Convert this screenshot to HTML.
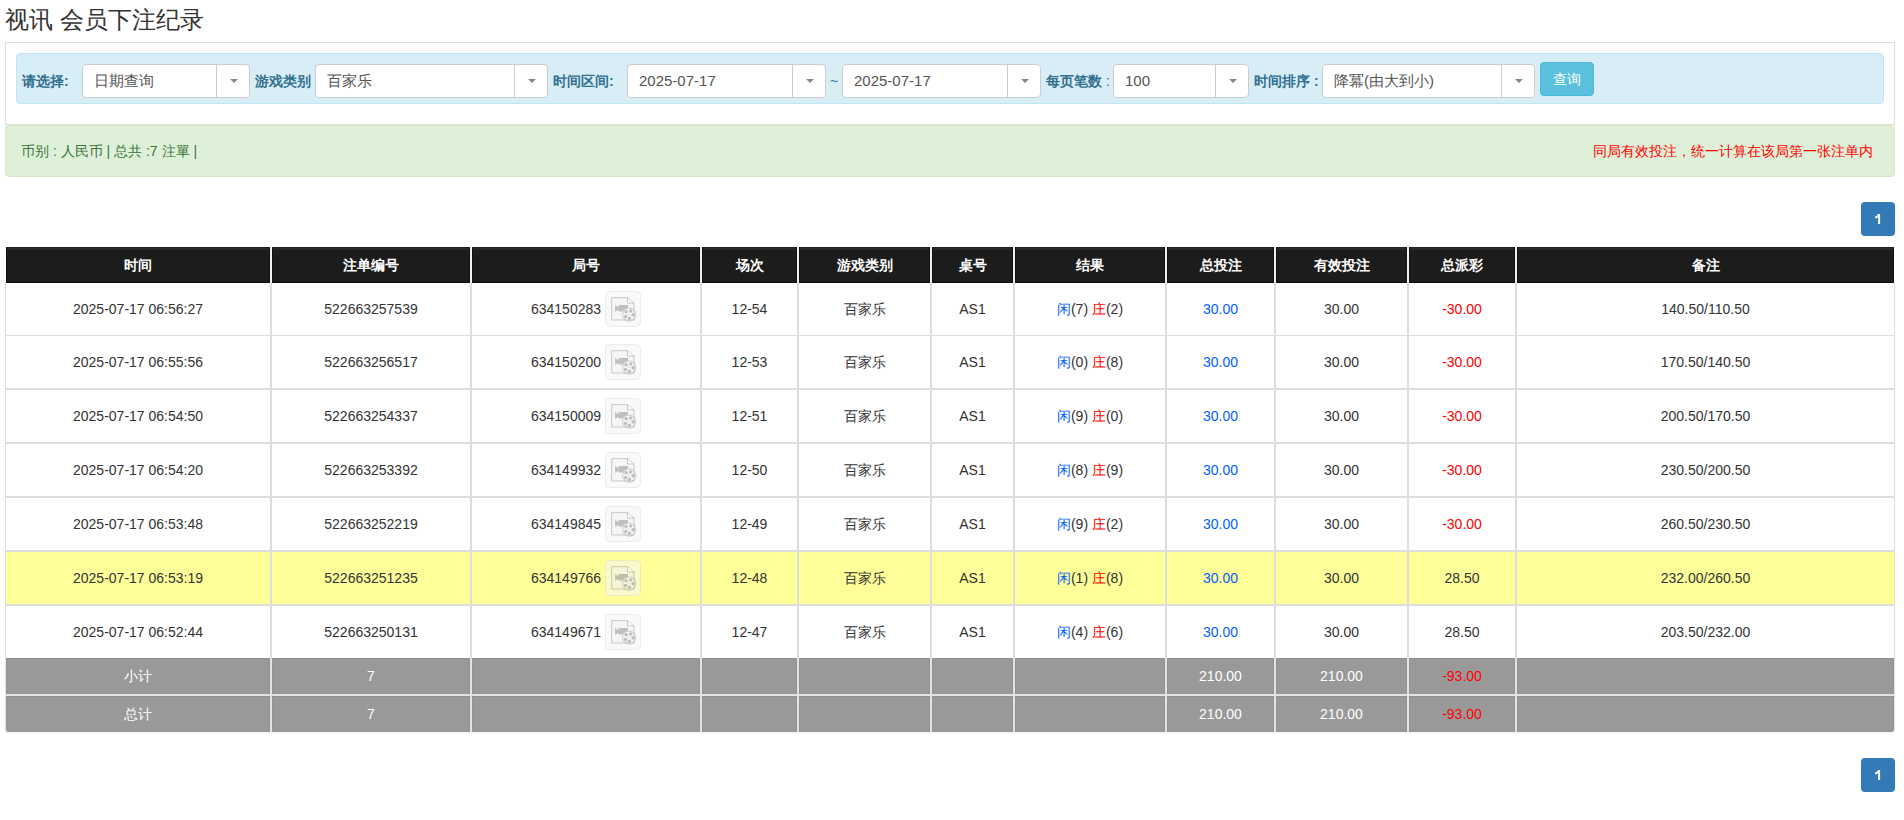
<!DOCTYPE html>
<html><head><meta charset="utf-8"><style>
html,body{margin:0;padding:0}
body{width:1904px;height:820px;position:relative;overflow:hidden;background:#fff;font-family:"Liberation Sans",sans-serif;color:#333;font-size:14px}
.a{position:absolute}
.title{left:5px;top:2px;font-size:24px;line-height:36px;color:#333;white-space:nowrap}
.panel{left:5px;top:42px;width:1888px;height:81px;border:1px solid #ddd}
.info{left:16px;top:53px;width:1866px;height:49px;border:1px solid #bce8f1;background:#d9edf7;border-radius:4px}
.lbl{position:absolute;top:64px;height:34px;line-height:34px;font-weight:bold;color:#31708f;white-space:nowrap}
.sel{position:absolute;top:64px;height:32px;border:1px solid #ccc;border-radius:4px;background:#fff;font-size:15px;color:#555;line-height:32px;white-space:nowrap}
.sel .t{position:absolute;left:11px;top:0}
.sel .d{position:absolute;top:0;bottom:0;width:1px;background:#ccc}
.sel .ar{position:absolute;top:14px;width:0;height:0;border-left:4px solid transparent;border-right:4px solid transparent;border-top:4px solid #888}
.btn{left:1540px;top:62px;width:52px;height:32px;border:1px solid #46b8da;background:#5bc0de;border-radius:4px;color:#fff;font-size:14px;line-height:32px;text-align:center}
.ok{left:5px;top:125px;width:1888px;height:50px;border:1px solid #d6e9c6;background:#dff0d8;border-radius:4px}
.okl{left:21px;top:125px;height:52px;line-height:52px;color:#3c763d;font-size:14px;white-space:nowrap}
.okr{right:31px;top:125px;height:52px;line-height:52px;color:#f00;font-size:14px;white-space:nowrap}
.pg{left:1861px;width:34px;height:34px;background:#337ab7;border-radius:4px;color:#fff;font-weight:bold;font-size:14px;line-height:34px;text-align:center}
.c{position:absolute;line-height:20px;display:flex;align-items:center;justify-content:center;white-space:nowrap;box-sizing:border-box}
.th{background:#1c1c1c;color:#fff;font-weight:bold;border:1px solid #111;border-top-color:#222;border-bottom-color:#0a0a0a;box-shadow:inset 0 1px 0 #2a2a2a,inset 0 2px 0 #262626}
.gy{background:#999;color:#fff;padding-bottom:2px;border-top:1px solid #8f8f8f;border-left:1px solid #939393;border-right:1px solid #939393}
.bg{background:#fff}
.yl{background:#ffff99}
.bl{color:#0060ff}
.rd{color:#f00}
.ic{margin-left:4px;display:inline-block;vertical-align:middle}
.in{white-space:pre;display:inline-block}
.nt{position:relative;top:1px}
</style></head><body>
<svg width="0" height="0" style="position:absolute"><defs><mask id="m" maskUnits="userSpaceOnUse" x="0" y="0" width="36" height="36"><rect width="36" height="36" fill="#fff"/><circle cx="24.2" cy="23.6" r="7.1" fill="#000"/></mask></defs></svg>
<div class="a title">视讯 会员下注纪录</div>
<div class="a panel"></div>
<div class="a info"></div>
<div class="lbl" style="left:22px">请选择:</div>
<div class="lbl" style="left:255px">游戏类别</div>
<div class="lbl" style="left:553px">时间区间:</div>
<div class="lbl" style="left:1046px">每页笔数 <span style="font-weight:normal">:</span></div>
<div class="lbl" style="left:1254px">时间排序 :</div>
<div class="sel" style="left:82px;width:166px"><span class="t" style="left:11px">日期查询</span><span class="d" style="left:133px"></span><span class="ar" style="left:147px"></span></div>
<div class="sel" style="left:315px;width:231px"><span class="t" style="left:11px">百家乐</span><span class="d" style="left:198px"></span><span class="ar" style="left:212px"></span></div>
<div class="sel" style="left:627px;width:197px"><span class="t" style="left:11px">2025-07-17</span><span class="d" style="left:164px"></span><span class="ar" style="left:178px"></span></div>
<div class="sel" style="left:842px;width:197px"><span class="t" style="left:11px">2025-07-17</span><span class="d" style="left:164px"></span><span class="ar" style="left:178px"></span></div>
<div class="sel" style="left:1113px;width:134px"><span class="t" style="left:11px">100</span><span class="d" style="left:101px"></span><span class="ar" style="left:115px"></span></div>
<div class="sel" style="left:1322px;width:211px"><span class="t" style="left:11px">降冪(由大到小)</span><span class="d" style="left:178px"></span><span class="ar" style="left:192px"></span></div>
<div class="a" style="left:830px;top:64px;line-height:34px;color:#31708f;font-size:14px">~</div>
<div class="a btn">查询</div>
<div class="a ok"></div>
<div class="a okl">币别 : 人民币 | 总共 :7 注單 |</div>
<div class="a okr">同局有效投注，统一计算在该局第一张注单内</div>
<div class="a pg" style="top:202px"><svg width="34" height="34" viewBox="0 0 34 34" style="display:block"><path d="M17.1 11.9H19.1V22H17.1V14.9Q15.9 15.9 14.1 16.5V14.7Q15.9 14 17.1 11.9Z" fill="#fff"/></svg></div>
<div class="a" style="left:5px;top:283px;width:1890px;height:375px;background:#ddd"></div>
<div class="c bg" style="left:6px;top:283px;width:264px;height:52px"><span class="in">2025-07-17 06:56:27</span></div>
<div class="c bg" style="left:272px;top:283px;width:198px;height:52px"><span class="in">522663257539</span></div>
<div class="c bg" style="left:472px;top:283px;width:228px;height:52px"><span class="in"><span class="nt">634150283</span><svg class="ic" width="36" height="36" viewBox="0 0 36 36"><rect x="0.5" y="0.5" width="35" height="35" rx="4" fill="rgba(245,245,245,0.57)" stroke="rgba(200,200,200,0.3)"/><path d="M6.7 6.7H22.5L29 12V29H6.7Z" fill="rgba(240,240,240,0.3)" stroke="rgba(0,0,0,0.19)"/><path d="M22.5 6.7V12H29" fill="rgba(255,255,255,0.6)" stroke="rgba(0,0,0,0.19)"/><path mask="url(#m)" d="M10.1 14L13.5 16.2V14H23V20.5H13.5V18.8L10.1 21Z" fill="rgba(0,0,0,0.22)"/><circle cx="24.2" cy="23.6" r="6.6" fill="rgba(250,250,250,0.3)" stroke="rgba(0,0,0,0.17)" stroke-width="1"/><circle cx="21.1" cy="20.8" r="1.75" fill="rgba(0,0,0,0.22)"/><circle cx="25.6" cy="19.9" r="1.75" fill="rgba(0,0,0,0.22)"/><circle cx="28" cy="23.7" r="1.75" fill="rgba(0,0,0,0.22)"/><circle cx="24.4" cy="27.2" r="1.75" fill="rgba(0,0,0,0.22)"/><circle cx="20.6" cy="25.4" r="1.75" fill="rgba(0,0,0,0.22)"/><circle cx="23.9" cy="23.4" r="0.6" fill="rgba(0,0,0,0.22)"/></svg></span></div>
<div class="c bg" style="left:702px;top:283px;width:95px;height:52px"><span class="in">12-54</span></div>
<div class="c bg" style="left:799px;top:283px;width:131px;height:52px"><span class="in">百家乐</span></div>
<div class="c bg" style="left:932px;top:283px;width:81px;height:52px"><span class="in">AS1</span></div>
<div class="c bg" style="left:1015px;top:283px;width:150px;height:52px"><span class="in"><span class="bl">闲</span>(7) <span class="rd">庄</span>(2)</span></div>
<div class="c bg" style="left:1167px;top:283px;width:107px;height:52px"><span class="in"><span class="bl">30.00</span></span></div>
<div class="c bg" style="left:1276px;top:283px;width:131px;height:52px"><span class="in">30.00</span></div>
<div class="c bg" style="left:1409px;top:283px;width:106px;height:52px"><span class="in"><span class="rd">-30.00</span></span></div>
<div class="c bg" style="left:1517px;top:283px;width:377px;height:52px"><span class="in">140.50/110.50</span></div>
<div class="c bg" style="left:6px;top:336px;width:264px;height:52px"><span class="in">2025-07-17 06:55:56</span></div>
<div class="c bg" style="left:272px;top:336px;width:198px;height:52px"><span class="in">522663256517</span></div>
<div class="c bg" style="left:472px;top:336px;width:228px;height:52px"><span class="in"><span class="nt">634150200</span><svg class="ic" width="36" height="36" viewBox="0 0 36 36"><rect x="0.5" y="0.5" width="35" height="35" rx="4" fill="rgba(245,245,245,0.57)" stroke="rgba(200,200,200,0.3)"/><path d="M6.7 6.7H22.5L29 12V29H6.7Z" fill="rgba(240,240,240,0.3)" stroke="rgba(0,0,0,0.19)"/><path d="M22.5 6.7V12H29" fill="rgba(255,255,255,0.6)" stroke="rgba(0,0,0,0.19)"/><path mask="url(#m)" d="M10.1 14L13.5 16.2V14H23V20.5H13.5V18.8L10.1 21Z" fill="rgba(0,0,0,0.22)"/><circle cx="24.2" cy="23.6" r="6.6" fill="rgba(250,250,250,0.3)" stroke="rgba(0,0,0,0.17)" stroke-width="1"/><circle cx="21.1" cy="20.8" r="1.75" fill="rgba(0,0,0,0.22)"/><circle cx="25.6" cy="19.9" r="1.75" fill="rgba(0,0,0,0.22)"/><circle cx="28" cy="23.7" r="1.75" fill="rgba(0,0,0,0.22)"/><circle cx="24.4" cy="27.2" r="1.75" fill="rgba(0,0,0,0.22)"/><circle cx="20.6" cy="25.4" r="1.75" fill="rgba(0,0,0,0.22)"/><circle cx="23.9" cy="23.4" r="0.6" fill="rgba(0,0,0,0.22)"/></svg></span></div>
<div class="c bg" style="left:702px;top:336px;width:95px;height:52px"><span class="in">12-53</span></div>
<div class="c bg" style="left:799px;top:336px;width:131px;height:52px"><span class="in">百家乐</span></div>
<div class="c bg" style="left:932px;top:336px;width:81px;height:52px"><span class="in">AS1</span></div>
<div class="c bg" style="left:1015px;top:336px;width:150px;height:52px"><span class="in"><span class="bl">闲</span>(0) <span class="rd">庄</span>(8)</span></div>
<div class="c bg" style="left:1167px;top:336px;width:107px;height:52px"><span class="in"><span class="bl">30.00</span></span></div>
<div class="c bg" style="left:1276px;top:336px;width:131px;height:52px"><span class="in">30.00</span></div>
<div class="c bg" style="left:1409px;top:336px;width:106px;height:52px"><span class="in"><span class="rd">-30.00</span></span></div>
<div class="c bg" style="left:1517px;top:336px;width:377px;height:52px"><span class="in">170.50/140.50</span></div>
<div class="c bg" style="left:6px;top:390px;width:264px;height:52px"><span class="in">2025-07-17 06:54:50</span></div>
<div class="c bg" style="left:272px;top:390px;width:198px;height:52px"><span class="in">522663254337</span></div>
<div class="c bg" style="left:472px;top:390px;width:228px;height:52px"><span class="in"><span class="nt">634150009</span><svg class="ic" width="36" height="36" viewBox="0 0 36 36"><rect x="0.5" y="0.5" width="35" height="35" rx="4" fill="rgba(245,245,245,0.57)" stroke="rgba(200,200,200,0.3)"/><path d="M6.7 6.7H22.5L29 12V29H6.7Z" fill="rgba(240,240,240,0.3)" stroke="rgba(0,0,0,0.19)"/><path d="M22.5 6.7V12H29" fill="rgba(255,255,255,0.6)" stroke="rgba(0,0,0,0.19)"/><path mask="url(#m)" d="M10.1 14L13.5 16.2V14H23V20.5H13.5V18.8L10.1 21Z" fill="rgba(0,0,0,0.22)"/><circle cx="24.2" cy="23.6" r="6.6" fill="rgba(250,250,250,0.3)" stroke="rgba(0,0,0,0.17)" stroke-width="1"/><circle cx="21.1" cy="20.8" r="1.75" fill="rgba(0,0,0,0.22)"/><circle cx="25.6" cy="19.9" r="1.75" fill="rgba(0,0,0,0.22)"/><circle cx="28" cy="23.7" r="1.75" fill="rgba(0,0,0,0.22)"/><circle cx="24.4" cy="27.2" r="1.75" fill="rgba(0,0,0,0.22)"/><circle cx="20.6" cy="25.4" r="1.75" fill="rgba(0,0,0,0.22)"/><circle cx="23.9" cy="23.4" r="0.6" fill="rgba(0,0,0,0.22)"/></svg></span></div>
<div class="c bg" style="left:702px;top:390px;width:95px;height:52px"><span class="in">12-51</span></div>
<div class="c bg" style="left:799px;top:390px;width:131px;height:52px"><span class="in">百家乐</span></div>
<div class="c bg" style="left:932px;top:390px;width:81px;height:52px"><span class="in">AS1</span></div>
<div class="c bg" style="left:1015px;top:390px;width:150px;height:52px"><span class="in"><span class="bl">闲</span>(9) <span class="rd">庄</span>(0)</span></div>
<div class="c bg" style="left:1167px;top:390px;width:107px;height:52px"><span class="in"><span class="bl">30.00</span></span></div>
<div class="c bg" style="left:1276px;top:390px;width:131px;height:52px"><span class="in">30.00</span></div>
<div class="c bg" style="left:1409px;top:390px;width:106px;height:52px"><span class="in"><span class="rd">-30.00</span></span></div>
<div class="c bg" style="left:1517px;top:390px;width:377px;height:52px"><span class="in">200.50/170.50</span></div>
<div class="c bg" style="left:6px;top:444px;width:264px;height:52px"><span class="in">2025-07-17 06:54:20</span></div>
<div class="c bg" style="left:272px;top:444px;width:198px;height:52px"><span class="in">522663253392</span></div>
<div class="c bg" style="left:472px;top:444px;width:228px;height:52px"><span class="in"><span class="nt">634149932</span><svg class="ic" width="36" height="36" viewBox="0 0 36 36"><rect x="0.5" y="0.5" width="35" height="35" rx="4" fill="rgba(245,245,245,0.57)" stroke="rgba(200,200,200,0.3)"/><path d="M6.7 6.7H22.5L29 12V29H6.7Z" fill="rgba(240,240,240,0.3)" stroke="rgba(0,0,0,0.19)"/><path d="M22.5 6.7V12H29" fill="rgba(255,255,255,0.6)" stroke="rgba(0,0,0,0.19)"/><path mask="url(#m)" d="M10.1 14L13.5 16.2V14H23V20.5H13.5V18.8L10.1 21Z" fill="rgba(0,0,0,0.22)"/><circle cx="24.2" cy="23.6" r="6.6" fill="rgba(250,250,250,0.3)" stroke="rgba(0,0,0,0.17)" stroke-width="1"/><circle cx="21.1" cy="20.8" r="1.75" fill="rgba(0,0,0,0.22)"/><circle cx="25.6" cy="19.9" r="1.75" fill="rgba(0,0,0,0.22)"/><circle cx="28" cy="23.7" r="1.75" fill="rgba(0,0,0,0.22)"/><circle cx="24.4" cy="27.2" r="1.75" fill="rgba(0,0,0,0.22)"/><circle cx="20.6" cy="25.4" r="1.75" fill="rgba(0,0,0,0.22)"/><circle cx="23.9" cy="23.4" r="0.6" fill="rgba(0,0,0,0.22)"/></svg></span></div>
<div class="c bg" style="left:702px;top:444px;width:95px;height:52px"><span class="in">12-50</span></div>
<div class="c bg" style="left:799px;top:444px;width:131px;height:52px"><span class="in">百家乐</span></div>
<div class="c bg" style="left:932px;top:444px;width:81px;height:52px"><span class="in">AS1</span></div>
<div class="c bg" style="left:1015px;top:444px;width:150px;height:52px"><span class="in"><span class="bl">闲</span>(8) <span class="rd">庄</span>(9)</span></div>
<div class="c bg" style="left:1167px;top:444px;width:107px;height:52px"><span class="in"><span class="bl">30.00</span></span></div>
<div class="c bg" style="left:1276px;top:444px;width:131px;height:52px"><span class="in">30.00</span></div>
<div class="c bg" style="left:1409px;top:444px;width:106px;height:52px"><span class="in"><span class="rd">-30.00</span></span></div>
<div class="c bg" style="left:1517px;top:444px;width:377px;height:52px"><span class="in">230.50/200.50</span></div>
<div class="c bg" style="left:6px;top:498px;width:264px;height:52px"><span class="in">2025-07-17 06:53:48</span></div>
<div class="c bg" style="left:272px;top:498px;width:198px;height:52px"><span class="in">522663252219</span></div>
<div class="c bg" style="left:472px;top:498px;width:228px;height:52px"><span class="in"><span class="nt">634149845</span><svg class="ic" width="36" height="36" viewBox="0 0 36 36"><rect x="0.5" y="0.5" width="35" height="35" rx="4" fill="rgba(245,245,245,0.57)" stroke="rgba(200,200,200,0.3)"/><path d="M6.7 6.7H22.5L29 12V29H6.7Z" fill="rgba(240,240,240,0.3)" stroke="rgba(0,0,0,0.19)"/><path d="M22.5 6.7V12H29" fill="rgba(255,255,255,0.6)" stroke="rgba(0,0,0,0.19)"/><path mask="url(#m)" d="M10.1 14L13.5 16.2V14H23V20.5H13.5V18.8L10.1 21Z" fill="rgba(0,0,0,0.22)"/><circle cx="24.2" cy="23.6" r="6.6" fill="rgba(250,250,250,0.3)" stroke="rgba(0,0,0,0.17)" stroke-width="1"/><circle cx="21.1" cy="20.8" r="1.75" fill="rgba(0,0,0,0.22)"/><circle cx="25.6" cy="19.9" r="1.75" fill="rgba(0,0,0,0.22)"/><circle cx="28" cy="23.7" r="1.75" fill="rgba(0,0,0,0.22)"/><circle cx="24.4" cy="27.2" r="1.75" fill="rgba(0,0,0,0.22)"/><circle cx="20.6" cy="25.4" r="1.75" fill="rgba(0,0,0,0.22)"/><circle cx="23.9" cy="23.4" r="0.6" fill="rgba(0,0,0,0.22)"/></svg></span></div>
<div class="c bg" style="left:702px;top:498px;width:95px;height:52px"><span class="in">12-49</span></div>
<div class="c bg" style="left:799px;top:498px;width:131px;height:52px"><span class="in">百家乐</span></div>
<div class="c bg" style="left:932px;top:498px;width:81px;height:52px"><span class="in">AS1</span></div>
<div class="c bg" style="left:1015px;top:498px;width:150px;height:52px"><span class="in"><span class="bl">闲</span>(9) <span class="rd">庄</span>(2)</span></div>
<div class="c bg" style="left:1167px;top:498px;width:107px;height:52px"><span class="in"><span class="bl">30.00</span></span></div>
<div class="c bg" style="left:1276px;top:498px;width:131px;height:52px"><span class="in">30.00</span></div>
<div class="c bg" style="left:1409px;top:498px;width:106px;height:52px"><span class="in"><span class="rd">-30.00</span></span></div>
<div class="c bg" style="left:1517px;top:498px;width:377px;height:52px"><span class="in">260.50/230.50</span></div>
<div class="c yl" style="left:6px;top:552px;width:264px;height:52px"><span class="in">2025-07-17 06:53:19</span></div>
<div class="c yl" style="left:272px;top:552px;width:198px;height:52px"><span class="in">522663251235</span></div>
<div class="c yl" style="left:472px;top:552px;width:228px;height:52px"><span class="in"><span class="nt">634149766</span><svg class="ic" width="36" height="36" viewBox="0 0 36 36"><rect x="0.5" y="0.5" width="35" height="35" rx="4" fill="rgba(245,245,245,0.57)" stroke="rgba(200,200,200,0.3)"/><path d="M6.7 6.7H22.5L29 12V29H6.7Z" fill="rgba(240,240,240,0.3)" stroke="rgba(0,0,0,0.19)"/><path d="M22.5 6.7V12H29" fill="rgba(255,255,255,0.6)" stroke="rgba(0,0,0,0.19)"/><path mask="url(#m)" d="M10.1 14L13.5 16.2V14H23V20.5H13.5V18.8L10.1 21Z" fill="rgba(0,0,0,0.22)"/><circle cx="24.2" cy="23.6" r="6.6" fill="rgba(250,250,250,0.3)" stroke="rgba(0,0,0,0.17)" stroke-width="1"/><circle cx="21.1" cy="20.8" r="1.75" fill="rgba(0,0,0,0.22)"/><circle cx="25.6" cy="19.9" r="1.75" fill="rgba(0,0,0,0.22)"/><circle cx="28" cy="23.7" r="1.75" fill="rgba(0,0,0,0.22)"/><circle cx="24.4" cy="27.2" r="1.75" fill="rgba(0,0,0,0.22)"/><circle cx="20.6" cy="25.4" r="1.75" fill="rgba(0,0,0,0.22)"/><circle cx="23.9" cy="23.4" r="0.6" fill="rgba(0,0,0,0.22)"/></svg></span></div>
<div class="c yl" style="left:702px;top:552px;width:95px;height:52px"><span class="in">12-48</span></div>
<div class="c yl" style="left:799px;top:552px;width:131px;height:52px"><span class="in">百家乐</span></div>
<div class="c yl" style="left:932px;top:552px;width:81px;height:52px"><span class="in">AS1</span></div>
<div class="c yl" style="left:1015px;top:552px;width:150px;height:52px"><span class="in"><span class="bl">闲</span>(1) <span class="rd">庄</span>(8)</span></div>
<div class="c yl" style="left:1167px;top:552px;width:107px;height:52px"><span class="in"><span class="bl">30.00</span></span></div>
<div class="c yl" style="left:1276px;top:552px;width:131px;height:52px"><span class="in">30.00</span></div>
<div class="c yl" style="left:1409px;top:552px;width:106px;height:52px"><span class="in"><span class="">28.50</span></span></div>
<div class="c yl" style="left:1517px;top:552px;width:377px;height:52px"><span class="in">232.00/260.50</span></div>
<div class="c bg" style="left:6px;top:606px;width:264px;height:52px"><span class="in">2025-07-17 06:52:44</span></div>
<div class="c bg" style="left:272px;top:606px;width:198px;height:52px"><span class="in">522663250131</span></div>
<div class="c bg" style="left:472px;top:606px;width:228px;height:52px"><span class="in"><span class="nt">634149671</span><svg class="ic" width="36" height="36" viewBox="0 0 36 36"><rect x="0.5" y="0.5" width="35" height="35" rx="4" fill="rgba(245,245,245,0.57)" stroke="rgba(200,200,200,0.3)"/><path d="M6.7 6.7H22.5L29 12V29H6.7Z" fill="rgba(240,240,240,0.3)" stroke="rgba(0,0,0,0.19)"/><path d="M22.5 6.7V12H29" fill="rgba(255,255,255,0.6)" stroke="rgba(0,0,0,0.19)"/><path mask="url(#m)" d="M10.1 14L13.5 16.2V14H23V20.5H13.5V18.8L10.1 21Z" fill="rgba(0,0,0,0.22)"/><circle cx="24.2" cy="23.6" r="6.6" fill="rgba(250,250,250,0.3)" stroke="rgba(0,0,0,0.17)" stroke-width="1"/><circle cx="21.1" cy="20.8" r="1.75" fill="rgba(0,0,0,0.22)"/><circle cx="25.6" cy="19.9" r="1.75" fill="rgba(0,0,0,0.22)"/><circle cx="28" cy="23.7" r="1.75" fill="rgba(0,0,0,0.22)"/><circle cx="24.4" cy="27.2" r="1.75" fill="rgba(0,0,0,0.22)"/><circle cx="20.6" cy="25.4" r="1.75" fill="rgba(0,0,0,0.22)"/><circle cx="23.9" cy="23.4" r="0.6" fill="rgba(0,0,0,0.22)"/></svg></span></div>
<div class="c bg" style="left:702px;top:606px;width:95px;height:52px"><span class="in">12-47</span></div>
<div class="c bg" style="left:799px;top:606px;width:131px;height:52px"><span class="in">百家乐</span></div>
<div class="c bg" style="left:932px;top:606px;width:81px;height:52px"><span class="in">AS1</span></div>
<div class="c bg" style="left:1015px;top:606px;width:150px;height:52px"><span class="in"><span class="bl">闲</span>(4) <span class="rd">庄</span>(6)</span></div>
<div class="c bg" style="left:1167px;top:606px;width:107px;height:52px"><span class="in"><span class="bl">30.00</span></span></div>
<div class="c bg" style="left:1276px;top:606px;width:131px;height:52px"><span class="in">30.00</span></div>
<div class="c bg" style="left:1409px;top:606px;width:106px;height:52px"><span class="in"><span class="">28.50</span></span></div>
<div class="c bg" style="left:1517px;top:606px;width:377px;height:52px"><span class="in">203.50/232.00</span></div>
<div class="a" style="left:6px;top:247px;width:1888px;height:36px;background:#f0f0f0"></div>
<div class="c th" style="left:6px;top:247px;width:264px;height:36px"><span class="in">时间</span></div>
<div class="c th" style="left:272px;top:247px;width:198px;height:36px"><span class="in">注单编号</span></div>
<div class="c th" style="left:472px;top:247px;width:228px;height:36px"><span class="in">局号</span></div>
<div class="c th" style="left:702px;top:247px;width:95px;height:36px"><span class="in">场次</span></div>
<div class="c th" style="left:799px;top:247px;width:131px;height:36px"><span class="in">游戏类别</span></div>
<div class="c th" style="left:932px;top:247px;width:81px;height:36px"><span class="in">桌号</span></div>
<div class="c th" style="left:1015px;top:247px;width:150px;height:36px"><span class="in">结果</span></div>
<div class="c th" style="left:1167px;top:247px;width:107px;height:36px"><span class="in">总投注</span></div>
<div class="c th" style="left:1276px;top:247px;width:131px;height:36px"><span class="in">有效投注</span></div>
<div class="c th" style="left:1409px;top:247px;width:106px;height:36px"><span class="in">总派彩</span></div>
<div class="c th" style="left:1517px;top:247px;width:377px;height:36px"><span class="in">备注</span></div>
<div class="a" style="left:5px;top:658px;width:1890px;height:74px;background:#e3e3e3;border-radius:0 0 3px 3px;box-shadow:0 1px 2px rgba(0,0,0,0.06)"></div>
<div class="c gy" style="left:6px;top:658px;width:264px;height:36px"><span class="in">小计</span></div>
<div class="c gy" style="left:272px;top:658px;width:198px;height:36px"><span class="in">7</span></div>
<div class="c gy" style="left:472px;top:658px;width:228px;height:36px"><span class="in"></span></div>
<div class="c gy" style="left:702px;top:658px;width:95px;height:36px"><span class="in"></span></div>
<div class="c gy" style="left:799px;top:658px;width:131px;height:36px"><span class="in"></span></div>
<div class="c gy" style="left:932px;top:658px;width:81px;height:36px"><span class="in"></span></div>
<div class="c gy" style="left:1015px;top:658px;width:150px;height:36px"><span class="in"></span></div>
<div class="c gy" style="left:1167px;top:658px;width:107px;height:36px"><span class="in">210.00</span></div>
<div class="c gy" style="left:1276px;top:658px;width:131px;height:36px"><span class="in">210.00</span></div>
<div class="c gy" style="left:1409px;top:658px;width:106px;height:36px"><span class="in"><span class="rd">-93.00</span></span></div>
<div class="c gy" style="left:1517px;top:658px;width:377px;height:36px"><span class="in"></span></div>
<div class="c gy" style="left:6px;top:696px;width:264px;height:36px;border-bottom-left-radius:3px"><span class="in">总计</span></div>
<div class="c gy" style="left:272px;top:696px;width:198px;height:36px"><span class="in">7</span></div>
<div class="c gy" style="left:472px;top:696px;width:228px;height:36px"><span class="in"></span></div>
<div class="c gy" style="left:702px;top:696px;width:95px;height:36px"><span class="in"></span></div>
<div class="c gy" style="left:799px;top:696px;width:131px;height:36px"><span class="in"></span></div>
<div class="c gy" style="left:932px;top:696px;width:81px;height:36px"><span class="in"></span></div>
<div class="c gy" style="left:1015px;top:696px;width:150px;height:36px"><span class="in"></span></div>
<div class="c gy" style="left:1167px;top:696px;width:107px;height:36px"><span class="in">210.00</span></div>
<div class="c gy" style="left:1276px;top:696px;width:131px;height:36px"><span class="in">210.00</span></div>
<div class="c gy" style="left:1409px;top:696px;width:106px;height:36px"><span class="in"><span class="rd">-93.00</span></span></div>
<div class="c gy" style="left:1517px;top:696px;width:377px;height:36px;border-bottom-right-radius:3px"><span class="in"></span></div>
<div class="a pg" style="top:758px"><svg width="34" height="34" viewBox="0 0 34 34" style="display:block"><path d="M17.1 11.9H19.1V22H17.1V14.9Q15.9 15.9 14.1 16.5V14.7Q15.9 14 17.1 11.9Z" fill="#fff"/></svg></div>
</body></html>
